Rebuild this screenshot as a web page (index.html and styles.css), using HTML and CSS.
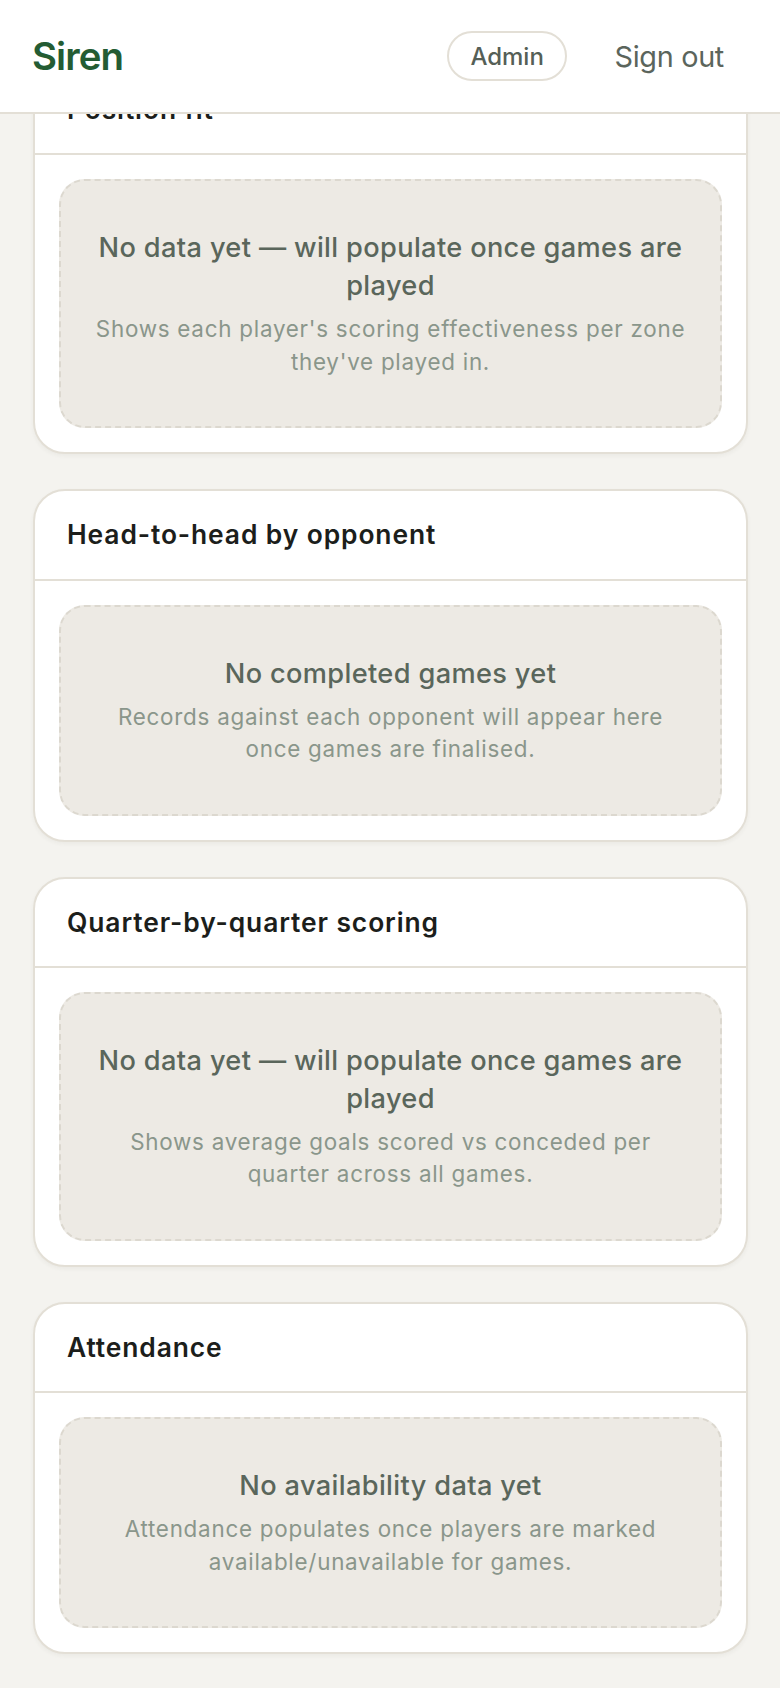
FILE: index.html
```html
<!DOCTYPE html>
<html lang="en">
<head>
<meta charset="utf-8">
<title>Siren</title>
<link rel="stylesheet" href="styles.css">
</head>
<body>
<header class="topbar">
  <div class="brand">Siren</div>
  <nav class="nav">
    <a class="pill" href="#">Admin</a>
    <button class="signout" type="button">Sign out</button>
  </nav>
</header>
<main class="content">
  <section class="card">
    <div class="card-head"><h2 class="card-title">Position fit</h2></div>
    <div class="card-body">
      <div class="empty">
        <p class="empty-title">No data yet — will populate once games are played</p>
        <p class="empty-sub">Shows each player's scoring effectiveness per zone they've played in.</p>
      </div>
    </div>
  </section>
  <section class="card">
    <div class="card-head"><h2 class="card-title">Head-to-head by opponent</h2></div>
    <div class="card-body">
      <div class="empty">
        <p class="empty-title">No completed games yet</p>
        <p class="empty-sub">Records against each opponent will appear here once games are finalised.</p>
      </div>
    </div>
  </section>
  <section class="card">
    <div class="card-head"><h2 class="card-title">Quarter-by-quarter scoring</h2></div>
    <div class="card-body">
      <div class="empty">
        <p class="empty-title">No data yet — will populate once games are played</p>
        <p class="empty-sub">Shows average goals scored vs conceded per quarter across all games.</p>
      </div>
    </div>
  </section>
  <section class="card">
    <div class="card-head"><h2 class="card-title">Attendance</h2></div>
    <div class="card-body">
      <div class="empty">
        <p class="empty-title">No availability data yet</p>
        <p class="empty-sub">Attendance populates once players are marked available/unavailable for games.</p>
      </div>
    </div>
  </section>
</main>
</body>
</html>
```
FILE: styles.css
```css
* { box-sizing: border-box; }
html, body { margin: 0; padding: 0; }
body {
  background: #f4f3ef;
  font-family: Inter, "Noto Sans", "Liberation Sans", sans-serif;
  color: #1c1e1b;
}
.topbar {
  position: fixed;
  top: 0; left: 0; right: 0;
  height: 114px;
  background: #ffffff;
  border-bottom: 2px solid #e3dfd6;
  display: flex;
  align-items: center;
  justify-content: space-between;
  padding: 0 32px;
  z-index: 10;
}
.brand {
  font-size: 38.4px;
  font-weight: 600;
  color: #245c33;
  letter-spacing: -0.9px;
}
.nav {
  display: flex;
  align-items: center;
  gap: 22px;
}
.pill {
  display: flex;
  align-items: center;
  height: 50px;
  padding: 0 21px;
  border: 2px solid #e3dfd6;
  border-radius: 999px;
  font-size: 24px;
  font-weight: 500;
  color: #555f57;
  text-decoration: none;
}
.signout {
  background: none;
  border: 0;
  padding: 0 24px 0 25.6px;
  font-family: inherit;
  font-size: 28.8px;
  font-weight: 400;
  color: #5b655c;
  letter-spacing: -0.3px;
}
.content {
  display: flex;
  flex-direction: column;
  gap: 35px;
  padding: 64px 32px 40px 33px;
}
.card {
  background: #ffffff;
  border: 2px solid #e3dfd6;
  border-radius: 32px;
  box-shadow: 0 2px 4px rgba(60, 50, 30, 0.05);
  overflow: hidden;
}
.card-head {
  padding: 24px 32px;
  border-bottom: 2px solid #e3dfd6;
}
.card-title {
  margin: 0;
  font-size: 26.4px;
  line-height: 39.3px;
  font-weight: 600;
  color: #1c1e1b;
  letter-spacing: 0.9px;
}
.card-body {
  padding: 24px;
}
.empty {
  background: #edeae4;
  border: 2px dashed #dcd8cf;
  border-radius: 25.6px;
  padding: 48px 32px;
  text-align: center;
}
.empty-title {
  margin: 0;
  font-size: 27.2px;
  line-height: 38px;
  font-weight: 500;
  color: #5a665b;
  letter-spacing: 0.35px;
}
.empty-sub {
  margin: 8px 0 0;
  font-size: 22.4px;
  line-height: 32.5px;
  color: #8a968b;
  letter-spacing: 0.75px;
}
```
